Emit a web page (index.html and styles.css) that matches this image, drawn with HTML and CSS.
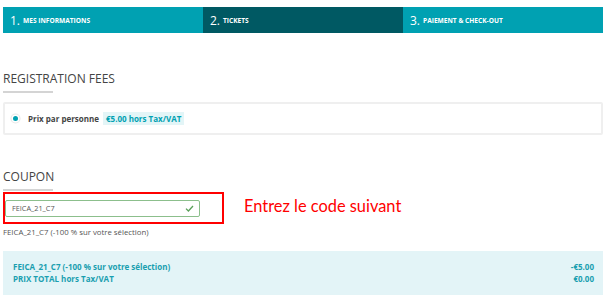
FILE: index.html
```html
<!DOCTYPE html>
<html lang="fr">
<head>
    <meta charset="UTF-8">
    <meta name="viewport" content="width=device-width, initial-scale=1.0">
    <title>Tickets</title>
    <link rel="stylesheet" href="styles.css">
</head>
<body>
    <div class="steps">
        <div class="step"><span class="num">1.</span> MES INFORMATIONS</div>
        <div class="step active"><span class="num">2.</span> TICKETS</div>
        <div class="step"><span class="num">3.</span> PAIEMENT &amp; CHECK-OUT</div>
    </div>

    <h2 class="section-title">Registration fees</h2>
    <div class="fee-box">
        <span class="radio"></span>
        <span class="fee-label">Prix par personne</span>
        <span class="fee-price">€5.00 hors Tax/VAT</span>
    </div>

    <h2 class="section-title coupon-title">Coupon</h2>
    <div class="coupon-row">
        <div class="highlight">
            <div class="coupon-input">
                <span>FEICA_21_C7</span>
                <svg width="9" height="7" viewBox="0 0 9 7"><path d="M1 3.6 L3.4 6 L8 1" fill="none" stroke="#5aa05a" stroke-width="1.3"/></svg>
            </div>
        </div>
        <div class="hint">Entrez le code suivant</div>
    </div>
    <div class="coupon-note">FEICA_21_C7 (-100 % sur votre sélection)</div>

    <div class="summary">
        <div class="summary-row"><span>FEICA_21_C7 (-100 % sur votre sélection)</span><span>-€5.00</span></div>
        <div class="summary-row"><span>PRIX TOTAL hors Tax/VAT</span><span>€0.00</span></div>
    </div>
</body>
</html>
```

FILE: styles.css
```css
body {
    font-family: "Open Sans", Arial, sans-serif;
    margin: 0;
    padding: 7px 2px 0 3px;
    color: #444;
    background: #fff;
}
.steps {
    display: flex;
    height: 26px;
}
.step {
    flex: 1;
    background: #00a1b2;
    color: #fff;
    font-size: 6.6px;
    font-weight: 700;
    display: flex;
    align-items: center;
    padding-left: 7px;
    gap: 3px;
}
.step.active {
    background: #005963;
}
.step .num {
    font-size: 12px;
    font-weight: 400;
}
.section-title {
    font-size: 12px;
    font-weight: 400;
    text-transform: uppercase;
    line-height: 14px;
    margin: 39px 0 0;
    color: #444;
}
.section-title::after {
    content: "";
    display: block;
    width: 50px;
    height: 2px;
    background: #d4d4d4;
    margin-top: 5px;
}
.coupon-title {
    margin-top: 35px;
}
.fee-box {
    margin-top: 9px;
    height: 29px;
    border: 2px solid #efefef;
    border-radius: 2px;
    display: flex;
    align-items: center;
    padding-left: 8px;
    font-size: 8px;
}
.radio {
    width: 5px;
    height: 5px;
    border-radius: 50%;
    background: #00a1b2;
    box-shadow: 0 0 0 1.5px #fff, 0 0 0 2.5px #e6e6e6;
    margin-right: 10px;
}
.fee-label {
    font-weight: 700;
    color: #444;
}
.fee-price {
    margin-left: 4px;
    background: #e3f5f7;
    color: #00a1b2;
    font-weight: 700;
    padding: 1px 3px;
}
.coupon-row {
    display: flex;
    align-items: center;
    margin-top: 1px;
}
.highlight {
    width: 217px;
    height: 28px;
    border: 2px solid #f00;
    display: flex;
    align-items: center;
}
.coupon-input {
    width: 182px;
    height: 15px;
    border: 1px solid #8cbf8c;
    border-radius: 2px;
    display: flex;
    align-items: center;
    justify-content: space-between;
    padding: 0 5px 0 6px;
    font-size: 7.3px;
    color: #555;
}
.hint {
    margin-left: 20px;
    margin-top: -6px;
    color: #f00;
    font-family: Lato, "Liberation Sans", sans-serif;
    font-size: 16.4px;
}
.coupon-note {
    font-size: 7.8px;
    color: #555;
    margin-top: 3px;
}
.summary {
    margin-top: 14px;
    background: #e3f4f7;
    padding: 10px 9px 9px 10px;
    height: 25px;
    font-size: 8px;
    font-weight: 700;
    color: #1a9fb0;
    line-height: 12px;
}
.summary-row {
    display: flex;
    justify-content: space-between;
}
```
